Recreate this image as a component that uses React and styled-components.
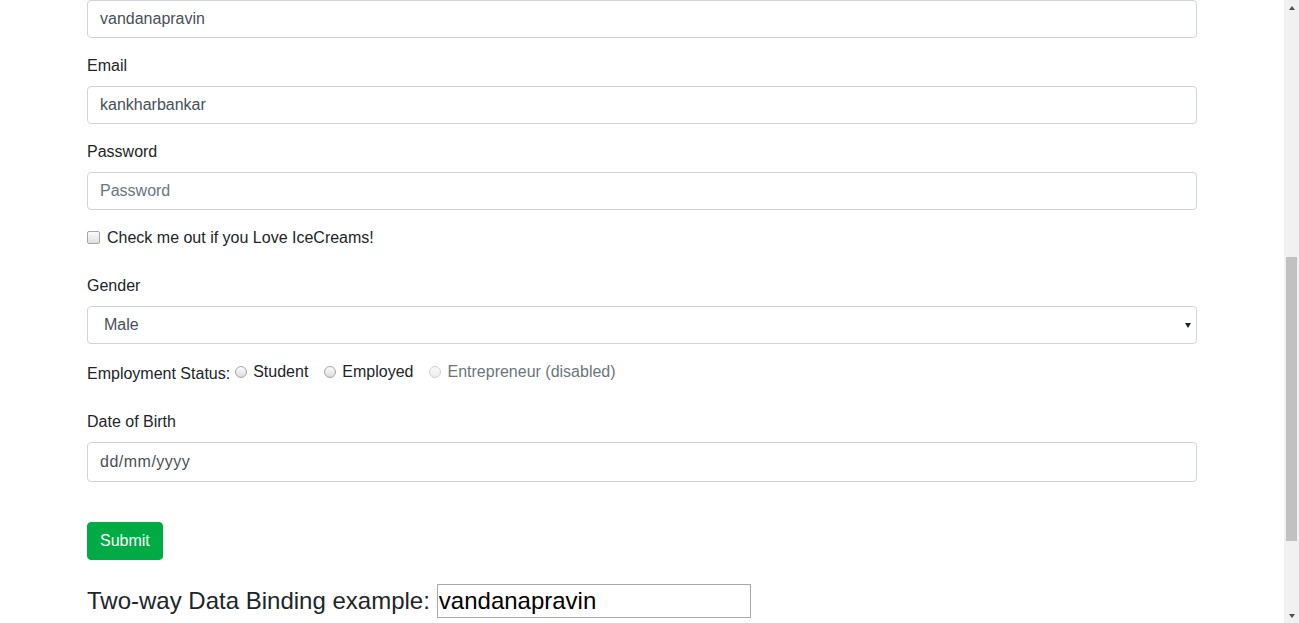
import React, { useState } from 'react';
import styled, { createGlobalStyle } from 'styled-components';

const GlobalStyle = createGlobalStyle`
  body {
    margin: 0;
    font-family: "Liberation Sans", Arial, sans-serif;
    font-size: 16px;
    line-height: 1.5;
    color: #212529;
    background: #fff;
  }
  *, *::before, *::after {
    box-sizing: border-box;
  }
`;

const Frame = styled.div`
  display: flex;
  height: 100vh;
  overflow: hidden;
`;

const Main = styled.main`
  flex: 1;
  min-width: 0;
  overflow: hidden;
`;

const ScrollBar = styled.div`
  width: 15px;
  flex-shrink: 0;
  display: flex;
  flex-direction: column;
  background: #f1f1f1;
`;

const ScrollArrow = styled.div`
  height: 15px;
  display: flex;
  align-items: center;
  justify-content: center;

  &::before {
    content: '';
    border-left: 3.5px solid transparent;
    border-right: 3.5px solid transparent;
    ${p => p.$down
      ? 'border-top: 4px solid #505050;'
      : 'border-bottom: 4px solid #505050;'}
  }
`;

const ScrollTrack = styled.div`
  flex: 1;
  padding: 242px 2px 0;
`;

const ScrollThumb = styled.div`
  height: 284px;
  background: #c1c1c1;
`;

const Container = styled.div`
  max-width: 1140px;
  margin: 0 auto;
  padding: 0 15px;
`;

const FormGroup = styled.div`
  margin-bottom: 16px;
`;

const Label = styled.label`
  display: inline-block;
  margin-bottom: 8px;
`;

const Input = styled.input`
  display: block;
  width: 100%;
  height: ${p => p.$tall ? 40 : 38}px;
  padding: 6px 12px;
  font-family: inherit;
  font-size: 16px;
  line-height: 1.5;
  color: #495057;
  background: #fff;
  border: 1px solid #ced4da;
  border-radius: 4px;
  outline: none;

  &::placeholder {
    color: ${p => p.$darkHint ? '#495057' : '#6c757d'};
    letter-spacing: ${p => p.$darkHint ? '0.5px' : 'normal'};
    opacity: 1;
  }
`;

const SelectWrap = styled.div`
  position: relative;

  &::after {
    content: '';
    position: absolute;
    right: 6px;
    top: 17px;
    border-left: 3.5px solid transparent;
    border-right: 3.5px solid transparent;
    border-top: 5px solid #222;
    pointer-events: none;
  }
`;

const Select = styled.select`
  display: block;
  width: 100%;
  height: 38px;
  padding: 6px 12px 6px 16px;
  font-family: inherit;
  font-size: 16px;
  line-height: 1.5;
  color: #495057;
  background: #fff;
  border: 1px solid #ced4da;
  border-radius: 4px;
  appearance: none;
  outline: none;
`;

const Check = styled.div`
  position: relative;
  display: block;
  padding-left: 20px;
  margin-bottom: 24px;
`;

const CheckBox = styled.input`
  position: absolute;
  left: 0;
  top: 5px;
  width: 13px;
  height: 13px;
  margin: 0;
  appearance: none;
  border: 1px solid #a6a6a6;
  border-radius: 2px;
  background: linear-gradient(#fcfcfc, #dedede);
`;

const StatusRow = styled.div`
  display: flex;
  align-items: center;
  height: 24px;
  margin-bottom: 26px;
`;

const StatusLabel = styled.span`
  margin-right: 5px;
  padding-top: 4px;
`;

const Radio = styled.label`
  display: inline-flex;
  align-items: center;
  margin-right: 16px;
  color: ${p => p.$disabled ? '#6c757d' : '#212529'};
`;

const RadioDot = styled.input`
  width: 12px;
  height: 12px;
  margin: 0 6px 0 0;
  appearance: none;
  border-radius: 50%;
  border: 1px solid ${p => p.disabled ? '#d2d2d2' : '#a6a6a6'};
  background: ${p => p.disabled
    ? 'linear-gradient(#fafafa, #ececec)'
    : 'linear-gradient(#fcfcfc, #dcdcdc)'};
`;

const Button = styled.button`
  display: inline-block;
  margin-top: 24px;
  height: 38px;
  padding: 6px 12px;
  font-family: inherit;
  font-size: 16px;
  line-height: 1.5;
  color: #fff;
  background: #00ab45;
  border: 1px solid #00ab45;
  border-radius: 4px;
  cursor: pointer;
`;

const Binding = styled.h4`
  display: flex;
  align-items: center;
  gap: 7px;
  margin: 24px 0 8px;
  font-size: 24px;
  font-weight: 400;
  line-height: 1.2;
`;

const BindingInput = styled.input`
  width: 314px;
  height: 34px;
  padding: 1px 1px;
  font-family: "Liberation Sans", Arial, sans-serif;
  font-size: 24px;
  color: #000;
  border: 1px solid #a9a9a9;
  outline: none;
`;

export default function App() {
  const [name, setName] = useState('vandanapravin');
  const [email, setEmail] = useState('kankharbankar');

  return (
    <Frame>
      <GlobalStyle />
      <Main>
        <Container>
          <form onSubmit={e => e.preventDefault()}>
            <FormGroup>
              <Input value={name} onChange={e => setName(e.target.value)} />
            </FormGroup>
            <FormGroup>
              <Label>Email</Label>
              <Input value={email} onChange={e => setEmail(e.target.value)} />
            </FormGroup>
            <FormGroup>
              <Label>Password</Label>
              <Input type="password" placeholder="Password" />
            </FormGroup>
            <Check>
              <CheckBox type="checkbox" id="ice" />
              <label htmlFor="ice">Check me out if you Love IceCreams!</label>
            </Check>
            <FormGroup>
              <Label>Gender</Label>
              <SelectWrap>
                <Select defaultValue="Male">
                  <option>Male</option>
                  <option>Female</option>
                </Select>
              </SelectWrap>
            </FormGroup>
            <StatusRow>
              <StatusLabel>Employment Status:</StatusLabel>
              <Radio>
                <RadioDot type="radio" name="emp" />
                Student
              </Radio>
              <Radio>
                <RadioDot type="radio" name="emp" />
                Employed
              </Radio>
              <Radio $disabled>
                <RadioDot type="radio" name="emp" disabled />
                Entrepreneur (disabled)
              </Radio>
            </StatusRow>
            <FormGroup>
              <Label>Date of Birth</Label>
              <Input $tall $darkHint placeholder="dd/mm/yyyy" />
            </FormGroup>
            <Button type="submit">Submit</Button>
          </form>
          <Binding>
            Two-way Data Binding example:
            <BindingInput value={name} onChange={e => setName(e.target.value)} />
          </Binding>
        </Container>
      </Main>
      <ScrollBar>
        <ScrollArrow />
        <ScrollTrack>
          <ScrollThumb />
        </ScrollTrack>
        <ScrollArrow $down />
      </ScrollBar>
    </Frame>
  );
}
